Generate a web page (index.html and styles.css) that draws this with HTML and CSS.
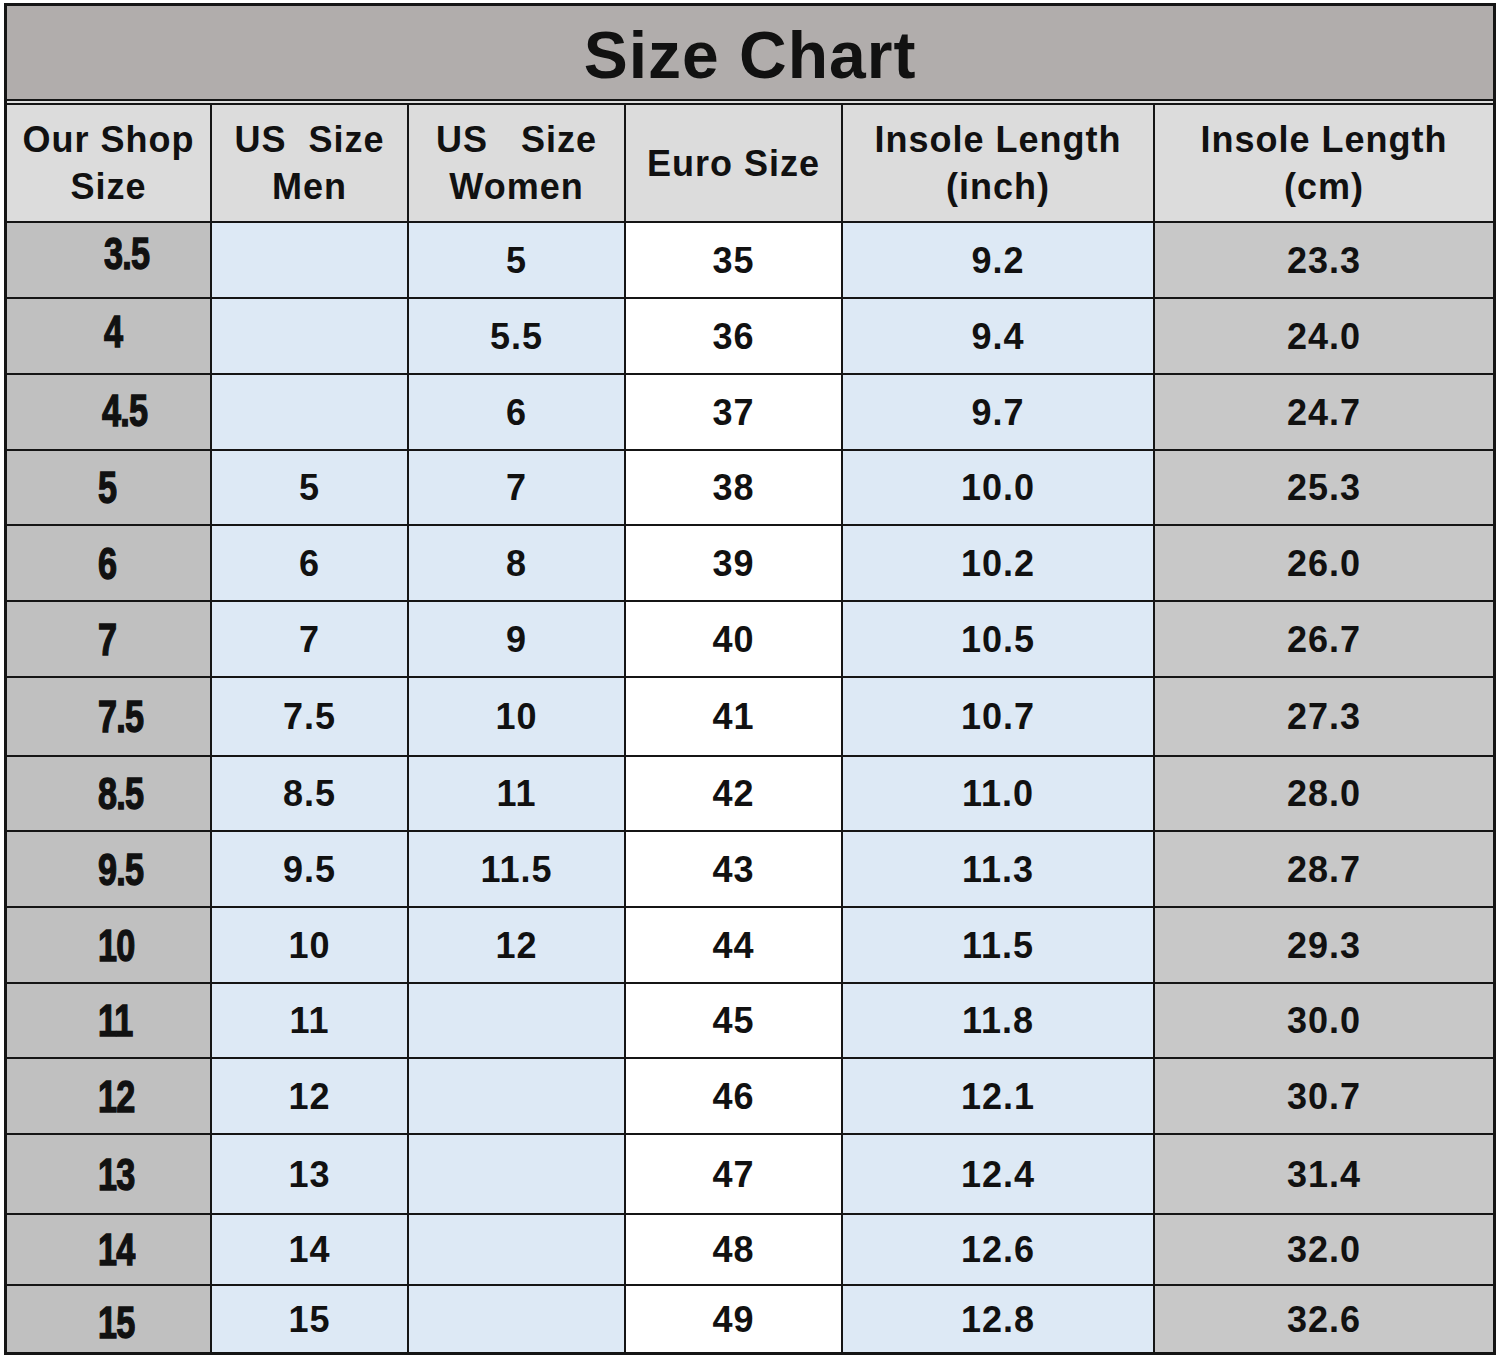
FILE: index.html
```html
<!DOCTYPE html>
<html lang="en">
<head>
<meta charset="utf-8">
<title>Size Chart</title>
<link rel="stylesheet" href="styles.css">
</head>
<body>
<div class="chart">
  <div class="title">Size Chart</div>
  <div class="sep"></div>
  <div class="grid">
    <div class="cell head">Our Shop<br>Size</div>
    <div class="cell head">US&nbsp;&nbsp;Size<br>Men</div>
    <div class="cell head">US&nbsp;&nbsp;&nbsp;Size<br>Women</div>
    <div class="cell head">Euro Size</div>
    <div class="cell head">Insole Length<br>(inch)</div>
    <div class="cell head">Insole Length<br>(cm)</div>

    <div class="cell shop up"><span>3.5</span></div><div class="cell blue"></div><div class="cell blue">5</div><div class="cell white">35</div><div class="cell blue">9.2</div><div class="cell grey">23.3</div>
    <div class="cell shop up2"><span>4</span></div><div class="cell blue"></div><div class="cell blue">5.5</div><div class="cell white">36</div><div class="cell blue">9.4</div><div class="cell grey">24.0</div>
    <div class="cell shop up3"><span>4.5</span></div><div class="cell blue"></div><div class="cell blue">6</div><div class="cell white">37</div><div class="cell blue">9.7</div><div class="cell grey">24.7</div>
    <div class="cell shop"><span>5</span></div><div class="cell blue">5</div><div class="cell blue">7</div><div class="cell white">38</div><div class="cell blue">10.0</div><div class="cell grey">25.3</div>
    <div class="cell shop"><span>6</span></div><div class="cell blue">6</div><div class="cell blue">8</div><div class="cell white">39</div><div class="cell blue">10.2</div><div class="cell grey">26.0</div>
    <div class="cell shop"><span>7</span></div><div class="cell blue">7</div><div class="cell blue">9</div><div class="cell white">40</div><div class="cell blue">10.5</div><div class="cell grey">26.7</div>
    <div class="cell shop"><span>7.5</span></div><div class="cell blue">7.5</div><div class="cell blue">10</div><div class="cell white">41</div><div class="cell blue">10.7</div><div class="cell grey">27.3</div>
    <div class="cell shop"><span>8.5</span></div><div class="cell blue">8.5</div><div class="cell blue">11</div><div class="cell white">42</div><div class="cell blue">11.0</div><div class="cell grey">28.0</div>
    <div class="cell shop"><span>9.5</span></div><div class="cell blue">9.5</div><div class="cell blue">11.5</div><div class="cell white">43</div><div class="cell blue">11.3</div><div class="cell grey">28.7</div>
    <div class="cell shop"><span>10</span></div><div class="cell blue">10</div><div class="cell blue">12</div><div class="cell white">44</div><div class="cell blue">11.5</div><div class="cell grey">29.3</div>
    <div class="cell shop"><span>11</span></div><div class="cell blue">11</div><div class="cell blue"></div><div class="cell white">45</div><div class="cell blue">11.8</div><div class="cell grey">30.0</div>
    <div class="cell shop"><span>12</span></div><div class="cell blue">12</div><div class="cell blue"></div><div class="cell white">46</div><div class="cell blue">12.1</div><div class="cell grey">30.7</div>
    <div class="cell shop"><span>13</span></div><div class="cell blue">13</div><div class="cell blue"></div><div class="cell white">47</div><div class="cell blue">12.4</div><div class="cell grey">31.4</div>
    <div class="cell shop"><span>14</span></div><div class="cell blue">14</div><div class="cell blue"></div><div class="cell white">48</div><div class="cell blue">12.6</div><div class="cell grey">32.0</div>
    <div class="cell shop down"><span>15</span></div><div class="cell blue">15</div><div class="cell blue"></div><div class="cell white">49</div><div class="cell blue">12.8</div><div class="cell grey">32.6</div>
  </div>
</div>
</body>
</html>
```
FILE: styles.css
```css
html, body {
  margin: 0;
  padding: 0;
  background: #ffffff;
}

body {
  font-family: "Liberation Sans", Arial, sans-serif;
  color: #111111;
}

.chart {
  box-sizing: border-box;
  width: 1492px;
  margin: 3px 0 0 4px;
  border: 3px solid #151515;
}

.title {
  height: 93px;
  background: #b1adac;
  display: flex;
  align-items: center;
  justify-content: center;
  font-size: 66px;
  font-weight: 700;
  letter-spacing: 1px;
  padding-top: 5px;
  box-sizing: border-box;
}

.sep {
  height: 6px;
  box-sizing: border-box;
  border-top: 2px solid #151515;
  border-bottom: 2px solid #151515;
  background: #dedede;
}

.grid {
  display: grid;
  grid-template-columns: 203px 195px 215px 215px 310px 1fr;
  grid-template-rows: 116px 74px 74px 74px 73px 74px 74px 77px 73px 74px 74px 73px 74px 78px 69px 66px;
  gap: 2px;
  background: #151515;
}

.cell {
  display: flex;
  align-items: center;
  justify-content: center;
  text-align: center;
  font-size: 36px;
  font-weight: 700;
  letter-spacing: 1px;
  line-height: 47px;
}

.head {
  background: #dcdcdc;
  white-space: nowrap;
}

.blue {
  background: #dde9f5;
}

.white {
  background: #ffffff;
}

.grey {
  background: #c8c8c8;
}

.shop {
  background: #c0c0c0;
  justify-content: flex-start;
  padding-left: 91px;
}

.shop span {
  display: inline-block;
  font-size: 45px;
  font-weight: 700;
  letter-spacing: -1px;
  transform: scaleX(0.76);
  transform-origin: left center;
  -webkit-text-stroke: 1.4px #111111;
}

.shop.up span {
  margin-top: -14px;
  margin-left: 6px;
}

.shop.up2 span {
  margin-top: -10px;
  margin-left: 6px;
}

.shop.up3 span {
  margin-top: -4px;
  margin-left: 4px;
}

.shop.down span {
  margin-top: 6px;
}
```
